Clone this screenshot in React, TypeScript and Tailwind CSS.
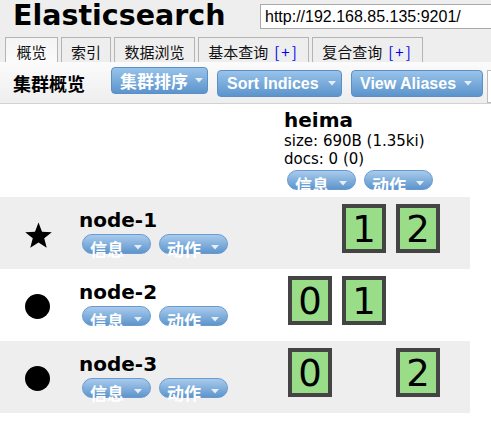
import React from "react";

function Caret({ className = "" }: { className?: string }) {
  return (
    <svg width="8" height="5" viewBox="0 0 8 5" className={className}>
      <path d="M0 0H8L4 4.5Z" fill="#e6eef8" />
    </svg>
  );
}

function Pill({ label }: { label: string }) {
  return (
    <div className="flex h-[20px] w-[69px] shrink-0 items-start rounded-full border border-[#6a9bd0] bg-linear-to-b from-[#a9cbec] to-[#5d95cc] pl-[7px]">
      <span className="shrink-0 pt-[6px] text-[17px] leading-[16px] font-bold text-white font-['Noto_Sans_CJK_SC',sans-serif] whitespace-nowrap">
        {label}
      </span>
      <Caret className="ml-[10px] mt-[10px] shrink-0" />
    </div>
  );
}

function Shard({ n }: { n?: string }) {
  if (!n) return <div className="h-[49px] w-[44px] shrink-0" />;
  return (
    <div className="flex h-[49px] w-[44px] shrink-0 items-center justify-center border-4 border-[#444444] bg-[#99dd88] pt-[2px] text-[37px] leading-none text-black">
      {n}
    </div>
  );
}

function Star() {
  return (
    <svg width="27" height="26" viewBox="0 0 27 26">
      <polygon
        points="13.5,0.5 17.03,9.65 26.81,10.17 19.21,16.35 21.73,25.83 13.5,20.5 5.27,25.83 7.79,16.35 0.19,10.17 9.97,9.65"
        fill="#000"
      />
    </svg>
  );
}

function Dot() {
  return (
    <svg width="25" height="25" viewBox="0 0 25 25">
      <circle cx="12.5" cy="12.5" r="12.5" fill="#000" />
    </svg>
  );
}

function NodeRow({
  name,
  star,
  shards,
  gray,
}: {
  name: string;
  star?: boolean;
  shards: (string | undefined)[];
  gray?: boolean;
}) {
  return (
    <div className={gray ? "flex h-[72px] w-[470px] bg-[#eeeeee]" : "flex h-[72px] w-[470px]"}>
      <div className="flex w-[79px] shrink-0 items-center pl-[25px] pt-[3px]">{star ? <Star /> : <Dot />}</div>
      <div className="flex w-[205px] shrink-0 flex-col pt-[11px]">
        <div className="text-[20px] leading-[24px] font-bold text-black">{name}</div>
        <div className="ml-[3px] mt-[2px] flex gap-[8px]">
          <Pill label="信息" />
          <Pill label="动作" />
        </div>
      </div>
      <div className="flex gap-[10px] pl-[4px] pt-[7px]">
        {shards.map((s, i) => (
          <Shard key={i} n={s} />
        ))}
      </div>
    </div>
  );
}

const tabs = [
  { label: "概览", w: "w-[53px]", active: true },
  { label: "索引", w: "w-[50px]" },
  { label: "数据浏览", w: "w-[81px]" },
  { label: "基本查询", w: "w-[111px]", plus: true },
  { label: "复合查询", w: "w-[111px]", plus: true },
];

export default function App() {
  return (
    <div className="h-[432px] w-[491px] overflow-hidden bg-white font-['DejaVu_Sans','Noto_Sans_CJK_SC',sans-serif] text-black">
      {/* header */}
      <div className="bg-[#eeeeee]">
        <div className="flex h-[37px] items-start">
          <div className="ml-[13px] mt-[2px] w-[247px] shrink-0 text-[28.5px] leading-none font-bold whitespace-nowrap">Elasticsearch</div>
          <div className="mt-[4px] flex h-[25px] w-[260px] shrink-0 items-center border border-[#a9a9a9] bg-white pl-[4px] font-['Liberation_Sans',sans-serif] text-[16px] whitespace-nowrap">
            http://192.168.85.135:9201/
          </div>
        </div>
        <div className="flex h-[25px] gap-[3px] pl-[5px]">
          {tabs.map((t) => (
            <div
              key={t.label}
              className={
                (t.active
                  ? "bg-linear-to-b from-[#f4f4f4] to-[#fbfbfb] "
                  : "bg-[#eeeeee] ") +
                t.w +
                " flex shrink-0 justify-center border border-b-0 border-[#b4b4b4] pt-[4px] font-['Noto_Sans_CJK_SC',sans-serif] text-[15px] leading-[20px] whitespace-nowrap text-[#111]"
              }
            >
              {t.label}
              {t.plus ? <span className="ml-[6px] tracking-[2px] text-[#0000ee]">[+]</span> : null}
            </div>
          ))}
        </div>
      </div>

      {/* toolbar */}
      <div className="flex h-[42px] items-start border-b border-[#d2d2d2] bg-linear-to-b from-[#fbfbfb] to-[#eeeeee]">
        <div className="ml-[13px] shrink-0 self-center whitespace-nowrap font-['Noto_Sans_CJK_SC',sans-serif] text-[18px] leading-none font-bold">集群概览</div>
        <div className="ml-[26px] mt-[5px] flex h-[27px] w-[97px] shrink-0 items-center rounded-[4px] border border-[#5b8fc6] bg-linear-to-b from-[#98c3ea] to-[#5b94cc] pl-[8px] font-['Noto_Sans_CJK_SC',sans-serif] text-[17px] font-bold text-white whitespace-nowrap">
          集群排序
          <Caret className="ml-[7px] shrink-0" />
        </div>
        <div className="ml-[9px] mt-[8px] flex h-[27px] w-[125px] shrink-0 items-center rounded-[4px] border border-[#5b8fc6] bg-linear-to-b from-[#98c3ea] to-[#5b94cc] pl-[9px] font-['Liberation_Sans',sans-serif] text-[16px] font-bold text-white whitespace-nowrap">
          Sort Indices
          <Caret className="ml-[9px] shrink-0" />
        </div>
        <div className="ml-[9px] mt-[8px] flex h-[27px] w-[132px] shrink-0 items-center rounded-[4px] border border-[#5b8fc6] bg-linear-to-b from-[#98c3ea] to-[#5b94cc] pl-[8px] font-['Liberation_Sans',sans-serif] text-[16px] font-bold text-white whitespace-nowrap">
          View Aliases
          <Caret className="ml-[8px] shrink-0" />
        </div>
        <div className="ml-[4px] mt-[8px] h-[33px] w-[20px] shrink-0 border border-[#bdbdbd] bg-white" />
      </div>

      {/* index header */}
      <div className="flex h-[93px] pt-[4px]">
        <div className="w-[284px] shrink-0" />
        <div className="flex flex-col">
          <div className="text-[20px] leading-[24px] font-bold">heima</div>
          <div className="text-[15px] leading-[18px] whitespace-nowrap">size: 690B (1.35ki)</div>
          <div className="text-[15px] leading-[18px] whitespace-nowrap">docs: 0 (0)</div>
          <div className="ml-[3px] mt-[2px] flex gap-[8px]">
            <Pill label="信息" />
            <Pill label="动作" />
          </div>
        </div>
      </div>

      <NodeRow name="node-1" star gray shards={[undefined, "1", "2"]} />
      <NodeRow name="node-2" shards={["0", "1"]} />
      <NodeRow name="node-3" gray shards={["0", undefined, "2"]} />
    </div>
  );
}
